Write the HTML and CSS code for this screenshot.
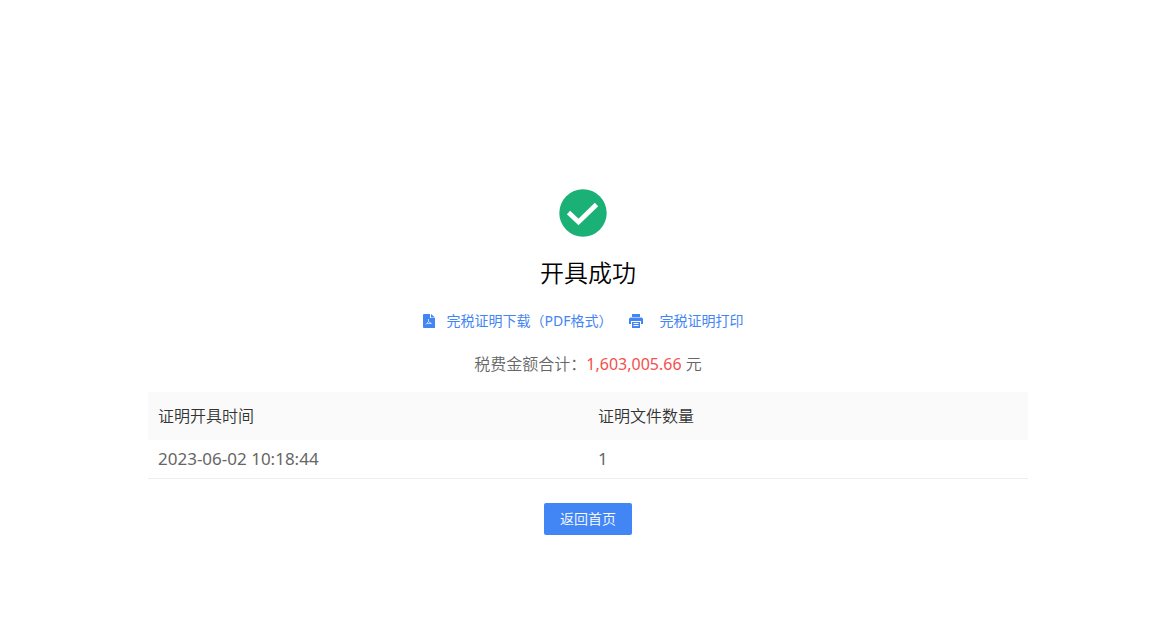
FILE: index.html
```html
<!DOCTYPE html>
<html lang="zh-CN">
<head>
<meta charset="utf-8">
<meta name="viewport" content="width=device-width, initial-scale=1">
<title>开具成功</title>
<link rel="stylesheet" href="styles.css">
</head>
<body>
<main class="result">
  <svg class="result-icon" viewBox="0 0 48 48" aria-hidden="true">
    <circle cx="24" cy="24" r="23.700" fill="#1ab076"/>
    <path d="M9.500 23.500 19.500 33 37.500 15.500" fill="none" stroke="#fff" stroke-width="4.800"/>
  </svg>
  <h1 class="result-title">开具成功</h1>
  <nav class="actions">
    <a class="action action-download" href="#download">
      <svg class="action-icon" viewBox="0 0 16 16" aria-hidden="true">
        <path d="M3 1h6v4h5v10H3a1 1 0 0 1-1-1V2a1 1 0 0 1 1-1z" fill="#4285f4"/>
        <path d="M10 1l4 3.500h-4z" fill="#4285f4"/>
        <path d="M7.500 6v2.500L5 11.500M7.500 8.500 10.500 10.500H6" fill="none" stroke="#dce8ff" stroke-width=".8"/>
      </svg>
      <span>完税证明下载（PDF格式）</span>
    </a>
    <a class="action action-print" href="#print">
      <svg class="action-icon" viewBox="0 0 16 16" aria-hidden="true">
        <path d="M4 1h8v3H4z" fill="#4285f4"/>
        <path d="M2 4h12v1H2z" fill="#a6c6fc"/>
        <path d="M2 5h12a1 1 0 0 1 1 1v5h-2V8H3v3H1V6a1 1 0 0 1 1-1z" fill="#4285f4"/>
        <path d="M4 9h8v6H4z" fill="#4285f4"/>
        <path d="M5.500 10.500h5M5.500 12.500h5" stroke="#fff"/>
      </svg>
      <span>完税证明打印</span>
    </a>
  </nav>
  <p class="total">税费金额合计：<span class="amount">1,603,005.66</span> 元</p>
  <table class="records">
    <thead><tr><th>证明开具时间</th><th>证明文件数量</th></tr></thead>
    <tbody><tr><td>2023-06-02 10:18:44</td><td>1</td></tr></tbody>
  </table>
  <button class="home-button" type="button">返回首页</button>
</main>
</body>
</html>
```
FILE: styles.css
```css
* {
  box-sizing: border-box;
}

body {
  margin: 0;
  background: #fff;
  color: #666;
  font: 350 16px/24px "Noto Sans", "Noto Sans CJK SC", sans-serif;
}

.result {
  display: flex;
  flex-direction: column;
  align-items: center;
  padding: 189px 0 32px 3px;
}

.result-icon {
  width: 48px;
  height: 48px;
  margin-right: 10px;
}

.result-title {
  margin: 20px 0 0;
  color: #000;
  font-size: 24px;
  font-weight: 350;
  line-height: 32px;
}

.actions {
  display: flex;
  gap: 16px;
  margin-top: 22px;
  margin-right: 12px;
}

.action {
  display: flex;
  align-items: center;
  color: #4285f4;
  font-size: 14px;
  font-weight: 400;
  line-height: 20px;
  text-decoration: none;
}

.action-download {
  gap: 10px;
}

.action-print {
  gap: 15px;
}

.action-icon {
  width: 16px;
  height: 16px;
}

.total {
  margin: 21px 0 0;
}

.amount {
  color: #f5504e;
  font-weight: 400;
}

.records {
  width: 880px;
  max-width: 100%;
  margin-top: 16px;
  border-collapse: collapse;
  table-layout: fixed;
  text-align: left;
}

.records th {
  padding: 12px 10px;
  background: #fafafa;
  color: #333;
  font-weight: 350;
}

.records td {
  padding: 7px 10px;
  border-bottom: 1px solid #eee;
  font-size: 17px;
  font-weight: 400;
}

.home-button {
  margin-top: 24px;
  padding: 6px 16px;
  border: 0;
  border-radius: 2px;
  background: #4285f4;
  color: #fff;
  font: inherit;
  font-size: 14px;
  line-height: 20px;
  cursor: pointer;
}
```
